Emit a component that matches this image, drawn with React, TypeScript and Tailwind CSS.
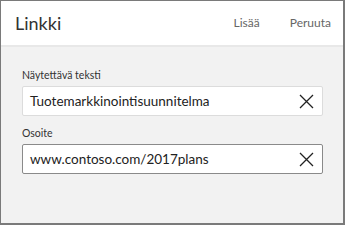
function ClearIcon() {
  return (
    <svg width="15" height="15" viewBox="0 0 15 15" className="shrink-0">
      <path d="M1 1 L14 14 M14 1 L1 14" stroke="#222" strokeWidth="1.3" fill="none" />
    </svg>
  );
}

type FieldProps = {
  label: string;
  value: string;
  focused?: boolean;
};

function Field({ label, value, focused }: FieldProps) {
  return (
    <div>
      <label className="block text-[10.5px] leading-[14px] text-[#333]">{label}</label>
      <div
        className={`mt-[4px] flex h-[30px] items-center justify-between rounded-[2px] border bg-white pl-[7px] pr-[8px] ${
          focused ? "border-[#8a8a8a]" : "border-[#dcdcdc]"
        }`}
      >
        <span className="text-[13.5px] text-[#222]">{value}</span>
        <ClearIcon />
      </div>
    </div>
  );
}

export default function App() {
  return (
    <div
      className="flex h-[225px] w-[345px] flex-col border border-b-2 border-r-2 border-[#7a7a7a] bg-[#f2f2f2]"
      style={{ fontFamily: "'Segoe UI', Lato, 'Noto Sans', sans-serif" }}
    >
      <header className="flex h-[46px] shrink-0 items-center justify-between border-b-2 border-[#e8e8e8] bg-white pl-[14px] pr-[12px]">
        <h1 className="text-[18px] text-[#333]">Linkki</h1>
        <nav className="flex gap-[30px] text-[12px] text-[#666]">
          <button type="button">Lisää</button>
          <button type="button">Peruuta</button>
        </nav>
      </header>

      <div className="flex flex-col gap-[10px] pl-[21px] pr-[20px] pt-[21px]">
        <Field label="Näytettävä teksti" value="Tuotemarkkinointisuunnitelma" />
        <Field label="Osoite" value="www.contoso.com/2017plans" focused />
      </div>
    </div>
  );
}
